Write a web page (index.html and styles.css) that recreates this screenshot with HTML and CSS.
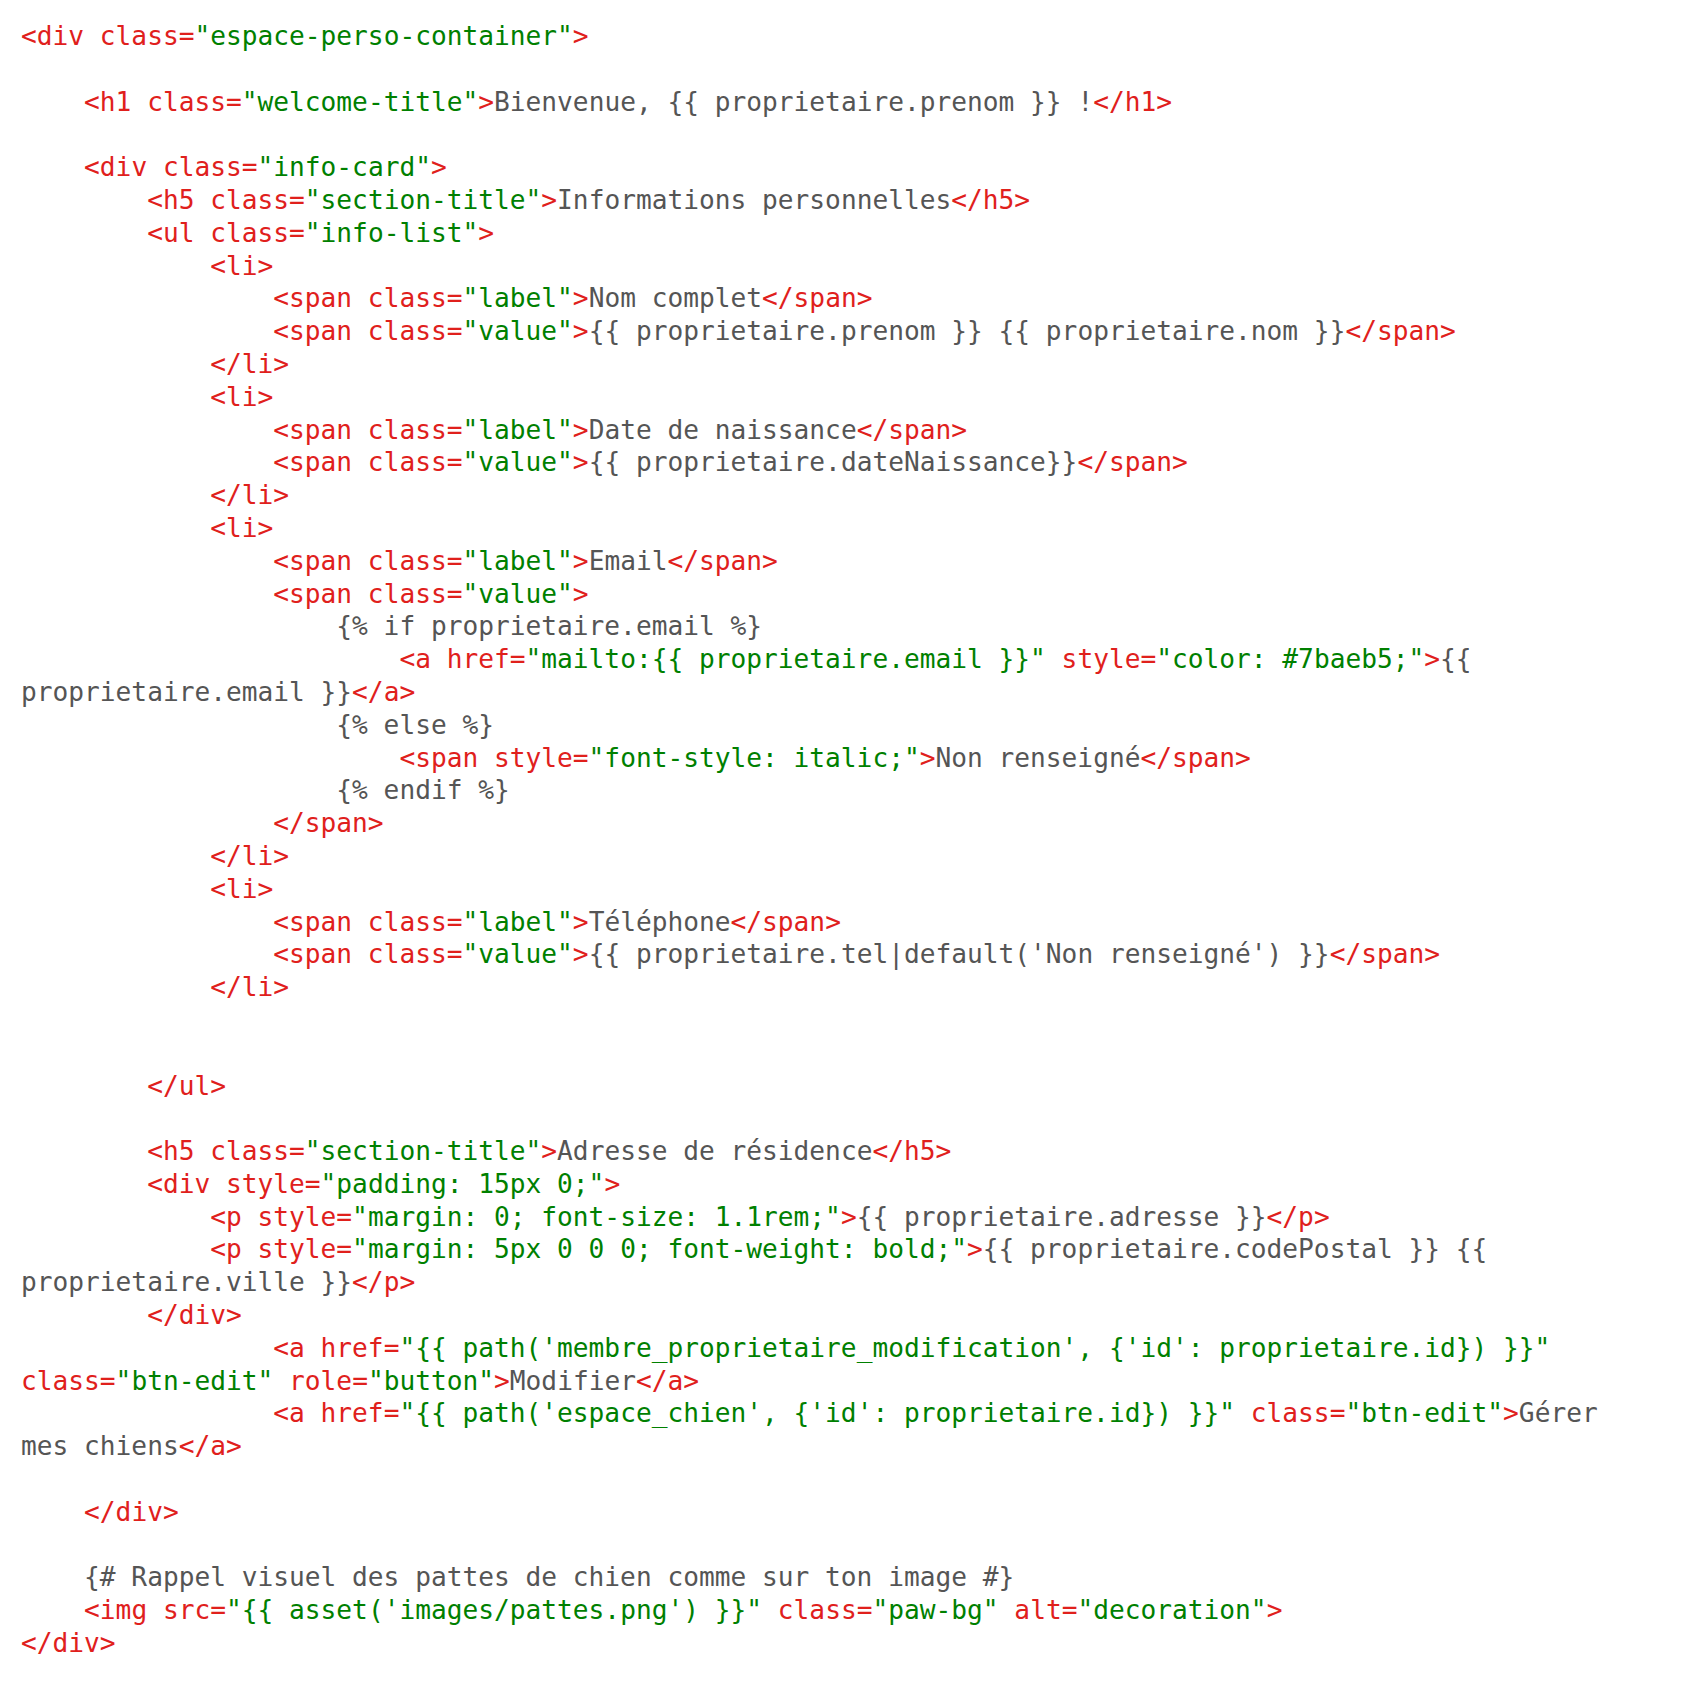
FILE: index.html
```html
<!DOCTYPE html>
<html lang="fr">
<head>
<meta charset="utf-8">
<title>Code</title>
<link rel="stylesheet" href="styles.css">
</head>
<body>
<pre class="code"><code><span class="t">&lt;div class=</span><span class="s">"espace-perso-container"</span><span class="t">&gt;</span>

    <span class="t">&lt;h1 class=</span><span class="s">"welcome-title"</span><span class="t">&gt;</span>Bienvenue, {{ proprietaire.prenom }} !<span class="t">&lt;/h1&gt;</span>

    <span class="t">&lt;div class=</span><span class="s">"info-card"</span><span class="t">&gt;</span>
        <span class="t">&lt;h5 class=</span><span class="s">"section-title"</span><span class="t">&gt;</span>Informations personnelles<span class="t">&lt;/h5&gt;</span>
        <span class="t">&lt;ul class=</span><span class="s">"info-list"</span><span class="t">&gt;</span>
            <span class="t">&lt;li&gt;</span>
                <span class="t">&lt;span class=</span><span class="s">"label"</span><span class="t">&gt;</span>Nom complet<span class="t">&lt;/span&gt;</span>
                <span class="t">&lt;span class=</span><span class="s">"value"</span><span class="t">&gt;</span>{{ proprietaire.prenom }} {{ proprietaire.nom }}<span class="t">&lt;/span&gt;</span>
            <span class="t">&lt;/li&gt;</span>
            <span class="t">&lt;li&gt;</span>
                <span class="t">&lt;span class=</span><span class="s">"label"</span><span class="t">&gt;</span>Date de naissance<span class="t">&lt;/span&gt;</span>
                <span class="t">&lt;span class=</span><span class="s">"value"</span><span class="t">&gt;</span>{{ proprietaire.dateNaissance}}<span class="t">&lt;/span&gt;</span>
            <span class="t">&lt;/li&gt;</span>
            <span class="t">&lt;li&gt;</span>
                <span class="t">&lt;span class=</span><span class="s">"label"</span><span class="t">&gt;</span>Email<span class="t">&lt;/span&gt;</span>
                <span class="t">&lt;span class=</span><span class="s">"value"</span><span class="t">&gt;</span>
                    {% if proprietaire.email %}
                        <span class="t">&lt;a href=</span><span class="s">"mailto:{{ proprietaire.email }}"</span> <span class="t">style=</span><span class="s">"color: #7baeb5;"</span><span class="t">&gt;</span>{{
proprietaire.email }}<span class="t">&lt;/a&gt;</span>
                    {% else %}
                        <span class="t">&lt;span style=</span><span class="s">"font-style: italic;"</span><span class="t">&gt;</span>Non renseigné<span class="t">&lt;/span&gt;</span>
                    {% endif %}
                <span class="t">&lt;/span&gt;</span>
            <span class="t">&lt;/li&gt;</span>
            <span class="t">&lt;li&gt;</span>
                <span class="t">&lt;span class=</span><span class="s">"label"</span><span class="t">&gt;</span>Téléphone<span class="t">&lt;/span&gt;</span>
                <span class="t">&lt;span class=</span><span class="s">"value"</span><span class="t">&gt;</span>{{ proprietaire.tel|default('Non renseigné') }}<span class="t">&lt;/span&gt;</span>
            <span class="t">&lt;/li&gt;</span>


        <span class="t">&lt;/ul&gt;</span>

        <span class="t">&lt;h5 class=</span><span class="s">"section-title"</span><span class="t">&gt;</span>Adresse de résidence<span class="t">&lt;/h5&gt;</span>
        <span class="t">&lt;div style=</span><span class="s">"padding: 15px 0;"</span><span class="t">&gt;</span>
            <span class="t">&lt;p style=</span><span class="s">"margin: 0; font-size: 1.1rem;"</span><span class="t">&gt;</span>{{ proprietaire.adresse }}<span class="t">&lt;/p&gt;</span>
            <span class="t">&lt;p style=</span><span class="s">"margin: 5px 0 0 0; font-weight: bold;"</span><span class="t">&gt;</span>{{ proprietaire.codePostal }} {{
proprietaire.ville }}<span class="t">&lt;/p&gt;</span>
        <span class="t">&lt;/div&gt;</span>
                <span class="t">&lt;a href=</span><span class="s">"{{ path('membre_proprietaire_modification', {'id': proprietaire.id}) }}"</span>
<span class="t">class=</span><span class="s">"btn-edit"</span> <span class="t">role=</span><span class="s">"button"</span><span class="t">&gt;</span>Modifier<span class="t">&lt;/a&gt;</span>
                <span class="t">&lt;a href=</span><span class="s">"{{ path('espace_chien', {'id': proprietaire.id}) }}"</span> <span class="t">class=</span><span class="s">"btn-edit"</span><span class="t">&gt;</span>Gérer
mes chiens<span class="t">&lt;/a&gt;</span>

    <span class="t">&lt;/div&gt;</span>

    {# Rappel visuel des pattes de chien comme sur ton image #}
    <span class="t">&lt;img src=</span><span class="s">"{{ asset('images/pattes.png') }}"</span> <span class="t">class=</span><span class="s">"paw-bg"</span> <span class="t">alt=</span><span class="s">"decoration"</span><span class="t">&gt;</span>
<span class="t">&lt;/div&gt;</span></code></pre>
</body>
</html>
```

FILE: styles.css
```css
html, body {
  margin: 0;
  padding: 0;
  background: #ffffff;
}

.code {
  margin: 0;
  padding: 20px 0 0 21px;
  font-family: "DejaVu Sans Mono", "Liberation Mono", monospace;
  font-size: 26.2px;
  line-height: 32.8px;
  color: #555555;
  white-space: pre;
}

.code code {
  font-family: inherit;
  font-size: inherit;
}

.t {
  color: #e0201c;
}

.s {
  color: #008000;
}
```
